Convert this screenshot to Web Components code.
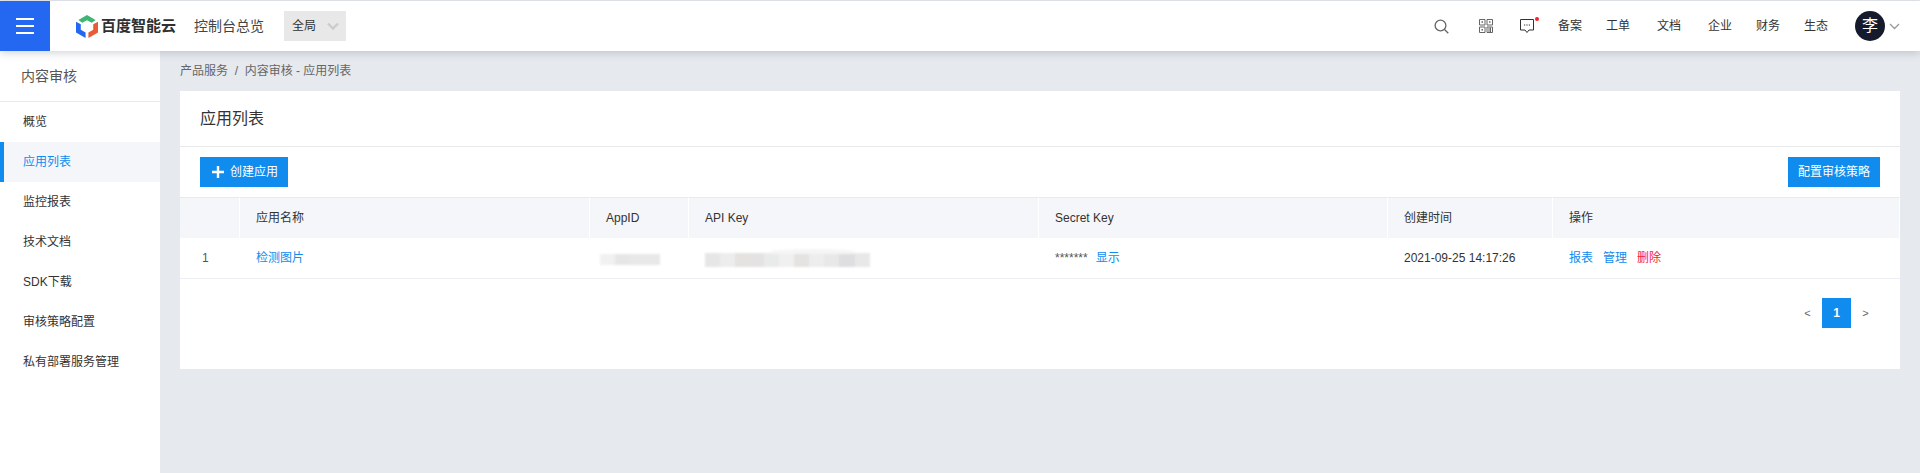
<!DOCTYPE html>
<html lang="zh">
<head>
<meta charset="utf-8">
<title>应用列表</title>
<style>
  html, body { margin: 0; height: 100%; }
  body {
    font: 12px/1.5 "Liberation Sans", "Noto Sans CJK SC", sans-serif;
    color: #333;
    background: #e6e9ee;
    overflow: hidden;
  }
</style>
</head>
<body>
<console-page>
  <top-bar slot="top"></top-bar>
  <side-nav slot="side" heading="内容审核">
    <nav-item>概览</nav-item>
    <nav-item active>应用列表</nav-item>
    <nav-item>监控报表</nav-item>
    <nav-item>技术文档</nav-item>
    <nav-item>SDK下载</nav-item>
    <nav-item>审核策略配置</nav-item>
    <nav-item>私有部署服务管理</nav-item>
  </side-nav>
  <bread-crumb>产品服务&nbsp; / &nbsp;内容审核 - 应用列表</bread-crumb>
  <app-card heading="应用列表">
    <div slot="tools"><blue-button plus>创建应用</blue-button></div>
    <div slot="tools"><blue-button>配置审核策略</blue-button></div>
    <app-table></app-table>
    <page-nav></page-nav>
  </app-card>
</console-page>

<script>
/* small helper: every element gets an open shadow root from a string */
class Base extends HTMLElement {
    constructor() {
        super();
        this.attachShadow({ mode: 'open' });
    }
    connectedCallback() {
        this.shadowRoot.innerHTML = this.render();
    }
}

class ConsolePage extends Base {
    render() {
        return `
        <style>
            :host { display: flex; flex-direction: column; height: 473px; padding-top: 1px; box-sizing: border-box; background: #e6e9ee; }
            .top { flex: none; position: relative; z-index: 2; }
            .body { flex: 1; display: flex; min-height: 0; }
            .side { flex: none; width: 160px; }
            main { flex: 1; min-width: 0; padding: 0 20px; }
        </style>
        <div class="top"><slot name="top"></slot></div>
        <div class="body">
            <div class="side"><slot name="side"></slot></div>
            <main><slot></slot></main>
        </div>`;
    }
}

class TopBar extends Base {
    render() {
        const links = [['备案', 0], ['工单', 24], ['文档', 27], ['企业', 27], ['财务', 24], ['生态', 24]];
        return `
        <style>
            :host { display: flex; align-items: center; height: 50px; background: #fff; box-shadow: 0 2px 8px rgba(90,100,120,.28); color: #333; }
            .menu { flex: none; width: 50px; height: 50px; background: #2468f2; display: flex; align-items: center; justify-content: center; }
            .logo { display: flex; align-items: center; margin-left: 26px; width: 108px; }
            .mark { flex: none; margin-right: 3px; }
            .brand { font-size: 15px; font-weight: 700; color: #303030; white-space: nowrap; }
            .home { margin-left: 10px; width: 90px; font-size: 14px; color: #444; }
            .scope { display: flex; align-items: center; width: 62px; height: 30px; box-sizing: border-box; padding-left: 8px; background: #e8e8e8; }
            .scope svg { margin-left: 11px; }
            .right { margin-left: auto; display: flex; align-items: center; height: 100%; }
            .ico { display: block; }
            .msg { position: relative; margin-left: 27px; height: 15px; }
            .dot { position: absolute; left: 15px; top: -2px; width: 4px; height: 4px; border-radius: 50%; background: #f5222d; }
            .link { font-size: 12px; color: #333; white-space: nowrap; }
            .avatar { width: 30px; height: 30px; margin-left: 27px; border-radius: 50%; background: #151b2d; color: #fff; font-size: 16px; line-height: 30px; text-align: center; }
            .caret { margin: 0 20px 0 4px; }
        </style>
        <div class="menu">
            <svg width="18" height="16" viewBox="0 0 18 16"><path d="M0 1h18M0 8h18M0 15h18" stroke="#fff" stroke-width="2"/></svg>
        </div>
        <div class="logo">
            <svg class="mark" width="22" height="23" viewBox="0 0 23 24">
                <path d="M11.500 0 20.500 5.200 16.500 8.200 11.500 5.500 6.500 8.200 2.500 5.200z" fill="#3fb573"/>
                <path d="M0 7 5 9.700V15.500L10 18.300V24L0 18.300z" fill="#2468f2"/>
                <path d="M23 7 18 9.700V15.500L13 18.300V24L23 18.300z" fill="#ea5a36"/>
            </svg>
            <span class="brand">百度智能云</span>
        </div>
        <span class="home">控制台总览</span>
        <div class="scope">全局
            <svg width="12" height="8" viewBox="0 0 12 8"><path d="M1 1.500 6 6.500 11 1.500" fill="none" stroke="#ccc" stroke-width="2.400"/></svg>
        </div>
        <div class="right">
            <svg class="ico" width="15" height="15" viewBox="0 0 15 15" fill="none" stroke="#666" stroke-width="1.300"><circle cx="6.500" cy="6.500" r="5.400"/><path d="M10.500 10.500 14.300 14.300"/></svg>
            <svg class="ico" style="margin-left:30px" width="14" height="14" viewBox="0 0 14 14" fill="none" stroke="#666"><path d="M.5.500h5.500v5.500h-5.500zM8 .5h5.500v5.500h-5.500zM.5 8h5.500v5.500h-5.500zM8 8h5.500v5.500h-5.500z"/><path d="M2.500 3h1.500M10 3h1.500M2.500 10.700h1.500" stroke-width="1.500"/><path d="M10 8.500v5M11.500 8.500v5" /></svg>
            <div class="msg">
                <svg class="ico" width="14" height="15" viewBox="0 0 14 15" fill="none" stroke="#333"><path d="M.5.500h13v10.500h-4.500l-2 2.500-2-2.500h-4.500z"/><path d="M4 6h1.200M6.400 6h1.200M8.800 6h1.200" /></svg>
                <span class="dot"></span>
            </div>
            ${links.map(([t, m], i) => `<span class="link" style="margin-left:${i ? m : 24}px">${t}</span>`).join('')}
            <div class="avatar">李</div>
            <svg class="caret" width="11" height="7" viewBox="0 0 11 7"><path d="M1 1 5.500 5.500 10 1" fill="none" stroke="#999" stroke-width="1.300"/></svg>
        </div>`;
    }
}

class SideNav extends Base {
    render() {
        return `
        <style>
            :host { display: block; height: 100%; background: #fff; }
            h2 { margin: 0; height: 51px; box-sizing: border-box; padding-left: 21px; font-size: 14px; font-weight: 400; line-height: 50px; color: #555; border-bottom: 1px solid #e8e9eb; }
        </style>
        <h2>${this.getAttribute('heading')}</h2>
        <slot></slot>`;
    }
}

class NavItem extends Base {
    render() {
        const on = this.hasAttribute('active');
        return `
        <style>
            :host { display: block; height: 40px; box-sizing: border-box; padding-left: ${on ? 19 : 23}px; line-height: 40px; color: ${on ? '#108cee' : '#333'};
                    ${on ? 'background: #f5f6fa; border-left: 4px solid #108cee;' : ''} }
        </style>
        <slot></slot>`;
    }
}

class BreadCrumb extends Base {
    render() {
        return `
        <style>
            :host { display: flex; align-items: center; height: 40px; color: #666; }
        </style>
        <slot></slot>`;
    }
}

class AppCard extends Base {
    render() {
        return `
        <style>
            :host { display: block; height: 278px; background: #fff; }
            h1 { margin: 0; height: 56px; box-sizing: border-box; padding-left: 20px; font-size: 16px; font-weight: 400; line-height: 55px; color: #333; border-bottom: 1px solid #e8e9eb; }
            .tools { display: flex; justify-content: space-between; padding: 10px 20px; }
        </style>
        <h1>${this.getAttribute('heading')}</h1>
        <div class="tools"><slot name="tools"></slot></div>
        <slot></slot>`;
    }
}

class BlueButton extends Base {
    render() {
        const plus = this.hasAttribute('plus');
        return `
        <style>
            :host { display: flex; align-items: center; justify-content: center; height: 30px; padding: 0 ${plus ? '10px 0 12px' : '10px'}; background: #108cee; color: #fff; }
            svg { margin-right: 6px; }
        </style>
        ${plus ? '<svg width="12" height="12" viewBox="0 0 12 12"><path d="M6 0v12M0 6h12" stroke="#fff" stroke-width="2.400"/></svg>' : ''}
        <slot></slot>`;
    }
}

class AppTable extends Base {
    render() {
        const cols = ['', '应用名称', 'AppID', 'API Key', 'Secret Key', '创建时间', '操作'];
        return `
        <style>
            :host { display: grid; grid-template-columns: 60px 350px 99px 350px 349px 165px 1fr; color: #333; }
            .th { height: 41px; box-sizing: border-box; padding-left: 16px; line-height: 40px; background: #f5f6fa; border-top: 1px solid #e8e9eb; border-right: 1px solid #fff; }
            .th:last-of-type { border-right: 0; }
            .td { height: 41px; box-sizing: border-box; padding-left: 16px; display: flex; align-items: center; border-bottom: 1px solid #eeeef6; white-space: nowrap; }
            .num { padding-left: 22px; color: #555; }
            a { color: #108cee; text-decoration: none; }
            a.del { color: #f5222d; }
            .ops a { margin-right: 10px; }
            .mask { filter: blur(1px); }
            .id { width: 60px; height: 11px; margin: 3px 0 0 0; background: linear-gradient(90deg, #f1f1f1 25%, #e6e6e6 25% 50%, #e9e8e8 50% 75%, #e8e8e8 75%); }
            .key { width: 165px; height: 14px; margin-top: 4px; position: relative; background: linear-gradient(90deg, #e6e6e6 0 9%, #ededed 9% 18%, #e4e3e1 18% 36%, #e9eaea 36% 45%, #f0f0f0 45% 54%, #e4e3e1 54% 63%, #ededed 63% 72%, #e8e8e8 72% 81%, #dedee0 81% 91%, #e8e8e8 91%); }
            .key::before { content: ""; position: absolute; left: 40%; top: -4px; width: 50%; height: 5px; background: #f5f5f5; border-radius: 50% 50% 0 0; }
            .stars { margin-right: 8px; color: #555; }
        </style>
        ${cols.map(c => `<div class="th">${c}</div>`).join('')}
        <div class="td num">1</div>
        <div class="td"><a href="#">检测图片</a></div>
        <div class="td" style="padding-left:10px"><div class="mask id"></div></div>
        <div class="td"><div class="mask key"></div></div>
        <div class="td"><span class="stars">*******</span><a href="#">显示</a></div>
        <div class="td">2021-09-25 14:17:26</div>
        <div class="td ops"><a href="#">报表</a><a href="#">管理</a><a class="del" href="#">删除</a></div>`;
    }
}

class PageNav extends Base {
    render() {
        return `
        <style>
            :host { display: flex; justify-content: flex-end; align-items: center; gap: 0; padding: 19px 20px 0 0; color: #666; }
            span { width: 29px; height: 30px; line-height: 30px; text-align: center; font-size: 11px; }
            .on { background: #108cee; color: #fff; font-size: 12px; font-weight: 700; }
        </style>
        <span>&lt;</span><span class="on">1</span><span>&gt;</span>`;
    }
}

customElements.define('console-page', ConsolePage);
customElements.define('top-bar', TopBar);
customElements.define('side-nav', SideNav);
customElements.define('nav-item', NavItem);
customElements.define('bread-crumb', BreadCrumb);
customElements.define('app-card', AppCard);
customElements.define('blue-button', BlueButton);
customElements.define('app-table', AppTable);
customElements.define('page-nav', PageNav);
</script>
</body>
</html>
